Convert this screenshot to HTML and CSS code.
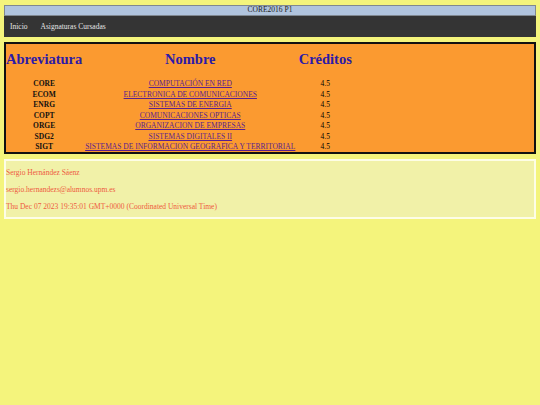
FILE: index.html
```html
<!DOCTYPE html>
<html lang="es">
<head>
<meta charset="utf-8">
<title>CORE2016 P1</title>
<link rel="stylesheet" href="styles.css">
</head>
<body>
<header class="title-bar">CORE2016 P1</header>
<nav class="nav">
  <a class="nav-link" href="#">Inicio</a>
  <a class="nav-link" href="#">Asignaturas Cursadas</a>
</nav>
<section class="courses">
  <table class="course-table">
    <thead>
      <tr><th class="col-abbr">Abreviatura</th><th class="col-name">Nombre</th><th class="col-cred">Créditos</th></tr>
    </thead>
    <tbody>
      <tr><td class="abbr">CORE</td><td><a href="#">COMPUTACIÓN EN RED</a></td><td>4.5</td></tr>
      <tr><td class="abbr">ECOM</td><td><a href="#">ELECTRONICA DE COMUNICACIONES</a></td><td>4.5</td></tr>
      <tr><td class="abbr">ENRG</td><td><a href="#">SISTEMAS DE ENERGIA</a></td><td>4.5</td></tr>
      <tr><td class="abbr">COPT</td><td><a href="#">COMUNICACIONES OPTICAS</a></td><td>4.5</td></tr>
      <tr><td class="abbr">ORGE</td><td><a href="#">ORGANIZACION DE EMPRESAS</a></td><td>4.5</td></tr>
      <tr><td class="abbr">SDG2</td><td><a href="#">SISTEMAS DIGITALES II</a></td><td>4.5</td></tr>
      <tr><td class="abbr">SIGT</td><td><a href="#">SISTEMAS DE INFORMACION GEOGRAFICA Y TERRITORIAL</a></td><td>4.5</td></tr>
    </tbody>
  </table>
</section>
<footer class="info">
  <p class="info-line">Sergio Hernández Sáenz</p>
  <p class="info-line">sergio.hernandezs@alumnos.upm.es</p>
  <p class="info-line">Thu Dec 07 2023 19:35:01 GMT+0000 (Coordinated Universal Time)</p>
</footer>
</body>
</html>
```
FILE: styles.css
```css
html, body {
  background: #f4f47c;
}
body {
  margin: 5px 4px;
  font-family: "Liberation Serif", "Times New Roman", serif;
  font-size: 7.5px;
}
.title-bar {
  background: #b0c4de;
  border: 1.5px solid #808890;
  text-align: center;
  color: #222;
  height: 11px;
  line-height: 8px;
  box-sizing: border-box;
}
.nav {
  background: #343434;
  height: 21px;
  display: flex;
  align-items: center;
  gap: 13px;
  padding-left: 6px;
}
.nav-link {
  color: #e6e6e6;
  text-decoration: none;
}
.courses {
  margin-top: 5px;
  background: #fb9a30;
  border: 2px solid #111;
  height: 112px;
  box-sizing: border-box;
  padding-top: 7px;
}
.course-table {
  border-collapse: collapse;
}
.course-table th {
  color: #2c1aa8;
  font-size: 14.5px;
  font-weight: bold;
  padding: 0 0 11px;
  line-height: 17px;
}
.course-table td {
  text-align: center;
  padding: 0;
  line-height: 10.5px;
  height: 10.5px;
  white-space: nowrap;
}
.col-abbr { width: 76px; }
.col-name { width: 216px; }
.col-cred { width: 54px; }
.abbr {
  font-weight: bold;
  color: #111;
}
.course-table a {
  color: #5a1f8e;
}
.info {
  margin-top: 5px;
  background: #f1f1a8;
  border: 2px solid #fdfde6;
  height: 60px;
  box-sizing: border-box;
  padding: 8px 0 0 0;
}
.info-line {
  color: #ee5a3e;
  margin: 0 0 8.5px;
  line-height: 8.5px;
}
```
